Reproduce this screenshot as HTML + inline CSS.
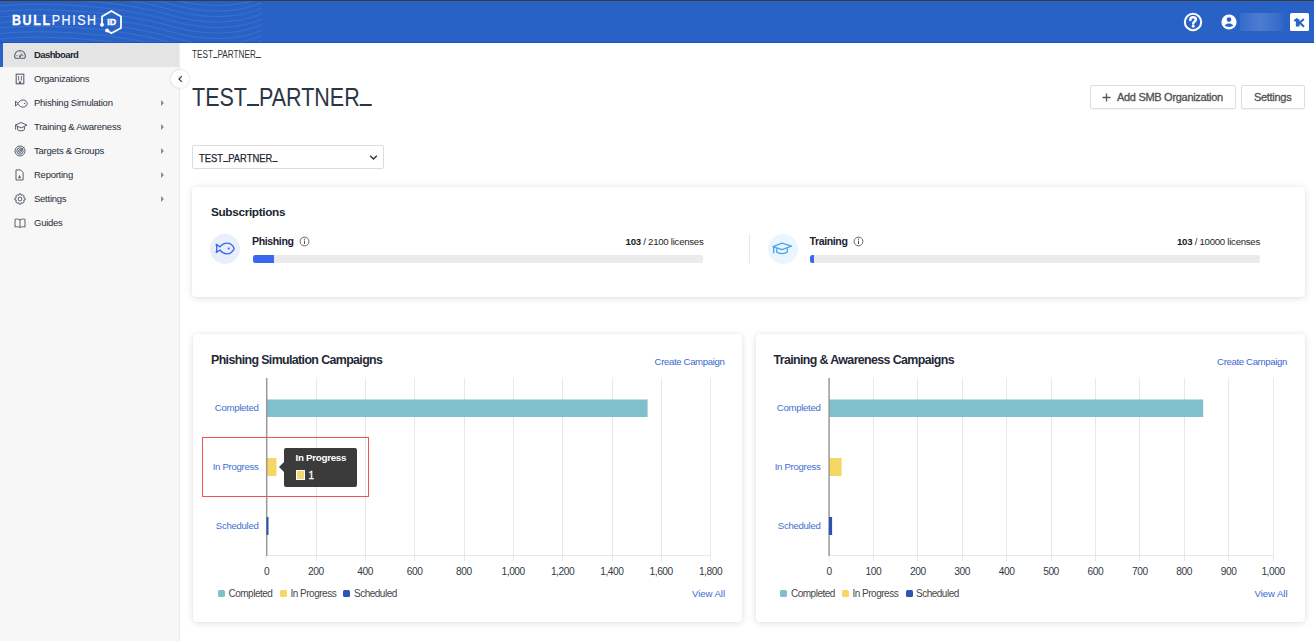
<!DOCTYPE html>
<html><head><meta charset="utf-8">
<style>
*{box-sizing:border-box;margin:0;padding:0}
html,body{width:1314px;height:641px;overflow:hidden;background:#fff;font-family:"Liberation Sans",sans-serif;color:#1f2733}
.abs{position:absolute}
#hdr{position:absolute;left:0;top:0;width:1314px;height:43px;background:#2962c6;border-top:1px solid #3b3a33;border-bottom:1px solid #1c52c2;overflow:hidden}
#side{position:absolute;left:0;top:43px;width:180px;height:598px;background:#f7f7f7;border-right:1px solid #ececec}
.nav{position:absolute;left:0;width:179px;height:24px;font-size:10px;color:#262d39}
.nav .t{position:absolute;left:34px;top:5.8px;white-space:nowrap;font-size:9.5px;letter-spacing:-0.25px}
.nav .ar{position:absolute;left:160.5px;top:9px;width:0;height:0;border-left:3.8px solid #8c9096;border-top:3px solid transparent;border-bottom:3px solid transparent}
.nav svg{position:absolute;left:13px;top:6px}
.nav.act{background:#e4e4e4}
.bl{position:absolute;left:0;top:0;width:3px;height:24px;background:#2962c6;z-index:2}
.nav.act .t{font-weight:bold;color:#1d2733;left:34px;letter-spacing:-0.6px}
.nav.act svg{left:13px}
.card{position:absolute;background:#fff;border-radius:4px;box-shadow:0 1px 7px rgba(0,0,0,.13),0 0 2px rgba(0,0,0,.04)}
.txt{position:absolute;white-space:nowrap}
.btn{position:absolute;border:1px solid #dedede;border-radius:2px;background:#fff;box-shadow:0 1px 1px rgba(0,0,0,.04)}
.bt{font-size:11px;color:#505050;letter-spacing:-0.3px;-webkit-text-stroke:0.3px #505050}
.lic{font-size:9.6px;color:#262626;letter-spacing:-0.25px}
.lic b{color:#1a1a1a}
.ct{font-size:12.4px;font-weight:bold;color:#1f2937;letter-spacing:-0.62px}
.lk{font-size:9.6px;color:#3a6ad0;letter-spacing:-0.35px}
.axl{font-size:10.2px;color:#323a45;letter-spacing:-0.45px}
.yl{font-size:9.6px;color:#3f70d0;letter-spacing:-0.3px}
.lg{position:absolute;width:7px;height:7px;border-radius:1.5px}
.lgt{font-size:10px;color:#474747;letter-spacing:-0.5px}
.us{display:inline-block;width:0.556em;height:1.6px;background:currentColor;vertical-align:baseline;margin-bottom:-0.5px}
</style></head><body>
<div id="hdr">
<svg class="abs" style="left:0;top:-1px" width="270" height="44" viewBox="0 0 270 44">
<g fill="none" stroke="#ffffff" stroke-opacity="0.09" stroke-width="1"><path d="M0 -32.5 C50 -37.5 125 -31.5 172 -17.5 C200 -9.5 235 -7.5 262 -19.5"/><path d="M0 -27.0 C50 -32.0 125 -26.0 172 -12.0 C200 -4.0 235 -2.0 262 -14.0"/><path d="M0 -21.5 C50 -26.5 125 -20.5 172 -6.5 C200 1.5 235 3.5 262 -8.5"/><path d="M0 -16.0 C50 -21.0 125 -15.0 172 -1.0 C200 7.0 235 9.0 262 -3.0"/><path d="M0 -10.5 C50 -15.5 125 -9.5 172 4.5 C200 12.5 235 14.5 262 2.5"/><path d="M0 -5.0 C50 -10.0 125 -4.0 172 10.0 C200 18.0 235 20.0 262 8.0"/><path d="M0 0.5 C50 -4.5 125 1.5 172 15.5 C200 23.5 235 25.5 262 13.5"/><path d="M0 6.0 C50 1.0 125 7.0 172 21.0 C200 29.0 235 31.0 262 19.0"/><path d="M0 11.5 C50 6.5 125 12.5 172 26.5 C200 34.5 235 36.5 262 24.5"/><path d="M0 17.0 C50 12.0 125 18.0 172 32.0 C200 40.0 235 42.0 262 30.0"/><path d="M0 22.5 C50 17.5 125 23.5 172 37.5 C200 45.5 235 47.5 262 35.5"/><path d="M0 28.0 C50 23.0 125 29.0 172 43.0 C200 51.0 235 53.0 262 41.0"/><path d="M0 33.5 C50 28.5 125 34.5 172 48.5 C200 56.5 235 58.5 262 46.5"/><path d="M0 39.0 C50 34.0 125 40.0 172 54.0 C200 62.0 235 64.0 262 52.0"/><path d="M0 44.5 C50 39.5 125 45.5 172 59.5 C200 67.5 235 69.5 262 57.5"/></g></svg>
<div class="abs" style="left:11.5px;top:11px;font-size:14.2px;color:#fff;letter-spacing:1.8px;white-space:nowrap;line-height:16px;transform:scaleX(.88);transform-origin:0 0"><b style="-webkit-text-stroke:0.3px #fff">BULL</b><span style="-webkit-text-stroke:0.15px #fff">PHISH</span></div>
<svg class="abs" style="left:94px;top:4px" width="34" height="34" viewBox="94 5 34 34">
<path d="M102 24.7 V16.5 L111.4 11 L121 16.5 V28 L111.4 33.3 L107.1 30.5" fill="none" stroke="#fff" stroke-width="1.75" stroke-linejoin="round"/>
<circle cx="102" cy="24.8" r="2" fill="#fff"/>
<circle cx="107.1" cy="30.5" r="2" fill="#fff"/>
<text x="111.8" y="24.6" font-family="Liberation Sans" font-weight="bold" font-size="8.9" fill="#fff" stroke="#fff" stroke-width="0.45" text-anchor="middle">ID</text>
</svg>
<svg class="abs" style="left:1183px;top:11px" width="20" height="20" viewBox="0 0 20 20">
<circle cx="10" cy="10" r="8.2" fill="none" stroke="#fff" stroke-width="2"/>
<path d="M7.3 7.9 C7.3 6.1 8.5 5.2 10.1 5.2 C11.8 5.2 12.9 6.2 12.9 7.6 C12.9 9.5 10.4 9.6 10.2 11.6" fill="none" stroke="#fff" stroke-width="2.5" stroke-linecap="round"/>
<circle cx="10.2" cy="14.3" r="1.45" fill="#fff"/>
</svg>
<svg class="abs" style="left:1221px;top:12.8px" width="16" height="16" viewBox="0 0 16 16">
<circle cx="8" cy="8" r="7.6" fill="#fff"/>
<circle cx="8" cy="5.6" r="2.3" fill="#2962c6"/>
<path d="M3.6 11.6 C4.6 9.9 6.4 9.4 8 9.4 C9.6 9.4 11.4 9.9 12.4 11.6 C11.3 12.4 9.8 12.9 8 12.9 C6.2 12.9 4.7 12.4 3.6 11.6Z" fill="#2962c6"/>
</svg>
<div class="abs" style="left:1240px;top:12px;width:44px;height:18px;background:linear-gradient(90deg,rgba(255,255,255,.06),rgba(255,255,255,.17) 45%,rgba(255,255,255,.08) 85%,rgba(255,255,255,.02))"></div>
<div class="abs" style="left:1290px;top:12px;width:18.5px;height:18px;background:#fff;border-radius:1.5px"></div>
<svg class="abs" style="left:1290px;top:11.3px" width="18" height="19" viewBox="0 0 18 19"><path d="M4.3 9 L6.9 7.2 V14.6" fill="none" stroke="#2962c6" stroke-width="2.1" stroke-linejoin="round"/><path d="M8.6 7.2 V14.6 M13.8 7 L9.8 10.7 L14 14.7" fill="none" stroke="#2962c6" stroke-width="2"/></svg>
</div>
<div id="side">
  <div class="bl"></div>
  <div class="nav act" style="top:0"><svg width="14" height="12" viewBox="0 0 14 12" style="left:13px;top:5px"><path d="M2.3 10.2 A5.3 5.3 0 1 1 11.7 10.2 Z" fill="none" stroke="#566070" stroke-width="1.1" stroke-linejoin="round"/><path d="M7 8.4 L9.2 5.6" stroke="#566070" stroke-width="1.1"/><circle cx="7" cy="8.6" r="1" fill="#566070"/><path d="M3.5 7.6 h1.1 M9.4 7.6 h1.1 M7 3.4 v1" stroke="#566070" stroke-width="0.9"/></svg><div class="t">Dashboard</div></div>
  <div class="nav" style="top:24px"><svg width="12" height="12" viewBox="0 0 12 12" style="left:14px;top:6px"><rect x="2.2" y="1.2" width="7.6" height="9.6" fill="none" stroke="#566070" stroke-width="1.1"/><path d="M4.6 3 v4.5 M7.4 3 v4.5" stroke="#566070" stroke-width="0.9"/><rect x="4.8" y="8.4" width="2.4" height="2.4" fill="#566070"/></svg><div class="t">Organizations</div></div>
  <div class="nav" style="top:48px"><svg width="14" height="10" viewBox="0 0 14 10" style="left:14px;top:8px"><path d="M1.5 2 L3.8 4.5 C5.3 1.7 7.6 1 9.3 1 C11.5 1 12.8 2.8 13.3 4.6 C12.8 6.4 11.5 8.2 9.3 8.2 C7.6 8.2 5.3 7.5 3.8 4.7 L1.5 7.2 Z" fill="none" stroke="#566070" stroke-width="1" stroke-linejoin="round"/><circle cx="10.6" cy="4.4" r="0.7" fill="#566070"/></svg><div class="t">Phishing Simulation</div><div class="ar"></div></div>
  <div class="nav" style="top:72px"><svg width="14" height="12" viewBox="0 0 14 12" style="left:14px;top:6px"><path d="M1 4.2 L7 1.5 L13 4.2 L7 6.9 Z" fill="none" stroke="#566070" stroke-width="1" stroke-linejoin="round"/><path d="M3.6 5.5 V8.8 C4.8 10.2 9.2 10.2 10.4 8.8 V5.5" fill="none" stroke="#566070" stroke-width="1"/><path d="M1.6 4.6 V8.6" stroke="#566070" stroke-width="1"/></svg><div class="t">Training &amp; Awareness</div><div class="ar"></div></div>
  <div class="nav" style="top:96px"><svg width="12" height="12" viewBox="0 0 12 12" style="left:13.5px;top:6px"><circle cx="6" cy="6" r="5" fill="none" stroke="#566070" stroke-width="1"/><circle cx="6" cy="6" r="3.2" fill="none" stroke="#566070" stroke-width="1"/><circle cx="6" cy="6" r="1.4" fill="none" stroke="#566070" stroke-width="1"/><path d="M6 6 L10.5 1.5" stroke="#566070" stroke-width="0.9"/></svg><div class="t">Targets &amp; Groups</div><div class="ar"></div></div>
  <div class="nav" style="top:120px"><svg width="10" height="12" viewBox="0 0 10 12" style="left:14.5px;top:6px"><path d="M1 0.9 H5.6 L8.1 3.4 V11 H1 Z" fill="none" stroke="#566070" stroke-width="1" stroke-linejoin="round"/><path d="M3 9.2 L4.6 5.8 L6.1 9.2 Z" fill="#566070"/></svg><div class="t">Reporting</div><div class="ar"></div></div>
  <div class="nav" style="top:144px"><svg width="12" height="12" viewBox="0 0 12 12" style="left:13.5px;top:5.8px"><path d="M9.84 4.86 L11.10 5.01 L11.10 6.99 L9.84 7.14 L9.52 7.91 L10.31 8.91 L8.91 10.31 L7.91 9.52 L7.14 9.84 L6.99 11.10 L5.01 11.10 L4.86 9.84 L4.09 9.52 L3.09 10.31 L1.69 8.91 L2.48 7.91 L2.16 7.14 L0.90 6.99 L0.90 5.01 L2.16 4.86 L2.48 4.09 L1.69 3.09 L3.09 1.69 L4.09 2.48 L4.86 2.16 L5.01 0.90 L6.99 0.90 L7.14 2.16 L7.91 2.48 L8.91 1.69 L10.31 3.09 L9.52 4.09 Z" fill="none" stroke="#566070" stroke-width="1" stroke-linejoin="round"/><circle cx="6" cy="6" r="1.9" fill="none" stroke="#566070" stroke-width="1"/></svg><div class="t">Settings</div><div class="ar"></div></div>
  <div class="nav" style="top:168px"><svg width="14" height="10" viewBox="0 0 14 10" style="left:13px;top:7px"><path d="M2 1.4 C3.8 0.8 5.5 1 7 1.9 C8.5 1 10.2 0.8 12 1.4 V9 C10.2 8.5 8.5 8.7 7 9.4 C5.5 8.7 3.8 8.5 2 9 Z" fill="none" stroke="#566070" stroke-width="1" stroke-linejoin="round"/><path d="M7 1.9 V9.4" stroke="#566070" stroke-width="1"/></svg><div class="t">Guides</div></div>
</div>
<div class="abs" style="left:171px;top:70px;width:18px;height:18px;border-radius:50%;background:#fff;box-shadow:0 0 3px rgba(0,0,0,.18)"><svg width="18" height="18" viewBox="0 0 18 18" style="position:absolute;left:0;top:0"><path d="M10.8 6.2 L8 9 L10.8 11.8" fill="none" stroke="#2b3a52" stroke-width="1.2"/></svg></div>

<div class="txt" style="left:192px;top:48.5px;font-size:10px;color:#333;transform:scaleX(.82);transform-origin:0 0">TEST<span class="us" style="height:1px;margin-bottom:0"></span>PARTNER<span class="us" style="height:1px;margin-bottom:0"></span></div>
<div class="txt" style="left:192px;top:82.5px;font-size:25px;color:#2b3644;transform:scaleX(.86);transform-origin:0 0">TEST<span class="us"></span>PARTNER<span class="us"></span></div>
<div class="btn" style="left:1089.5px;top:85px;width:146px;height:24px"></div>
<svg class="abs" style="left:1102px;top:93px" width="9" height="9" viewBox="0 0 9 9"><path d="M4.5 0.5 V8.5 M0.5 4.5 H8.5" stroke="#555" stroke-width="1.3"/></svg>
<div class="txt bt" style="left:1117px;top:91px">Add SMB Organization</div>
<div class="btn" style="left:1241px;top:85px;width:64px;height:24px"></div>
<div class="txt bt" style="left:1254px;top:91px">Settings</div>
<div class="abs" style="left:192px;top:145px;width:191.5px;height:24px;border:1px solid #dcdcdc;border-radius:2px;background:#fff"></div>
<div class="txt" style="left:199px;top:151.5px;font-size:10.5px;color:#1f2733;-webkit-text-stroke:0.25px #1f2733;transform:scaleX(.895);transform-origin:0 0">TEST<span class="us" style="height:1.2px;margin-bottom:-0.2px"></span>PARTNER<span class="us" style="height:1.2px;margin-bottom:-0.2px"></span></div>
<svg class="abs" style="left:369px;top:154px" width="9" height="7" viewBox="0 0 9 7"><path d="M1.2 1.8 L4.5 5 L7.8 1.8" fill="none" stroke="#333" stroke-width="1.4"/></svg>

<div class="card" style="left:192px;top:187px;width:1113px;height:110px"></div>
<div class="txt" style="left:211px;top:204.5px;font-size:11.8px;font-weight:bold;color:#1a2433;letter-spacing:-0.35px">Subscriptions</div>
<div class="abs" style="left:210px;top:233.5px;width:30px;height:30px;border-radius:50%;background:#e9eefb"></div>
<svg class="abs" style="left:214px;top:241px" width="22" height="15" viewBox="0 0 22 15"><path d="M2.3 3.4 L5.9 5.9 C7.9 3.5 10.3 2.1 13 2.1 C16.4 2.1 19 4.6 20.2 7.45 C19 10.3 16.4 12.8 13 12.8 C10.3 12.8 7.9 11.4 5.9 9 L2.3 11.5 C2.9 9.9 2.9 5 2.3 3.4 Z" fill="none" stroke="#3566ef" stroke-width="1.35" stroke-linejoin="round"/><circle cx="14.7" cy="7.5" r="1" fill="#3566ef"/></svg>
<div class="txt" style="left:252px;top:234.5px;font-size:10.6px;font-weight:bold;color:#1a2433;letter-spacing:-0.4px">Phishing</div>
<svg class="abs" style="left:298.5px;top:236px" width="11" height="11" viewBox="0 0 11 11"><circle cx="5.5" cy="5.5" r="4.4" fill="none" stroke="#555" stroke-width="0.9"/><path d="M5.5 4.6 V8" stroke="#555" stroke-width="1"/><circle cx="5.5" cy="3.2" r="0.6" fill="#555"/></svg>
<div class="txt lic" style="right:610.5px;top:235.5px"><b>103</b> / 2100 licenses</div>
<div class="abs" style="left:252.5px;top:255.3px;width:450.8px;height:7.4px;border-radius:2.5px;background:#ebebeb;overflow:hidden"><div style="width:21.5px;height:100%;background:#3868f0"></div></div>
<div class="abs" style="left:748.5px;top:234px;width:1px;height:29px;background:#e8e8e8"></div>
<div class="abs" style="left:767.5px;top:233.5px;width:30px;height:30px;border-radius:50%;background:#eaf5fd"></div>
<svg class="abs" style="left:771px;top:241px" width="22" height="15" viewBox="0 0 22 15"><path d="M2 5.6 L11 2.1 L20.5 5.2 L11 8.6 Z" fill="none" stroke="#4aa5e8" stroke-width="1.3" stroke-linejoin="round"/><path d="M5.7 7.2 V11 C7.6 13.1 14.4 13.1 16.3 11 V7.2" fill="none" stroke="#4aa5e8" stroke-width="1.3"/><path d="M2.7 6 V12.2" stroke="#4aa5e8" stroke-width="1.4"/></svg>
<div class="txt" style="left:809.5px;top:234.5px;font-size:10.6px;font-weight:bold;color:#1a2433;letter-spacing:-0.4px">Training</div>
<svg class="abs" style="left:853px;top:236px" width="11" height="11" viewBox="0 0 11 11"><circle cx="5.5" cy="5.5" r="4.4" fill="none" stroke="#555" stroke-width="0.9"/><path d="M5.5 4.6 V8" stroke="#555" stroke-width="1"/><circle cx="5.5" cy="3.2" r="0.6" fill="#555"/></svg>
<div class="txt lic" style="right:54px;top:235.5px"><b>103</b> / 10000 licenses</div>
<div class="abs" style="left:809.5px;top:255.3px;width:450.8px;height:7.4px;border-radius:2.5px;background:#ebebeb;overflow:hidden"><div style="width:4.8px;height:100%;background:#3868f0"></div></div>

<div class="card" style="left:192.5px;top:334px;width:549.5px;height:287.5px"></div>
<div class="card" style="left:755.5px;top:334px;width:549px;height:287.5px"></div>
<div class="txt ct" style="left:211px;top:352.5px">Phishing Simulation Campaigns</div>
<div class="txt lk" style="right:589.5px;top:355.5px">Create Campaign</div>
<div class="txt ct" style="left:773.5px;top:352.5px">Training &amp; Awareness Campaigns</div>
<div class="txt lk" style="right:27px;top:355.5px">Create Campaign</div>
<svg class="abs" style="left:0;top:0" width="1314" height="641"><path d="M316.5 378.5 V561" stroke="#e8e8e8" stroke-width="1"/><path d="M365.5 378.5 V561" stroke="#e8e8e8" stroke-width="1"/><path d="M414.5 378.5 V561" stroke="#e8e8e8" stroke-width="1"/><path d="M464.5 378.5 V561" stroke="#e8e8e8" stroke-width="1"/><path d="M513.5 378.5 V561" stroke="#e8e8e8" stroke-width="1"/><path d="M562.5 378.5 V561" stroke="#e8e8e8" stroke-width="1"/><path d="M612.5 378.5 V561" stroke="#e8e8e8" stroke-width="1"/><path d="M661.5 378.5 V561" stroke="#e8e8e8" stroke-width="1"/><path d="M710.5 378.5 V561" stroke="#e8e8e8" stroke-width="1"/><path d="M266 561 V556" stroke="#e8e8e8" stroke-width="1"/><path d="M266.7 555.5 H711" stroke="#e8e8e8" stroke-width="1"/><rect x="266.7" y="399.5" width="380.9" height="17.5" fill="#80bfcc"/><rect x="266.7" y="458" width="9.7" height="18" fill="#f3d865"/><path d="M266.70 378 V556" stroke="#999" stroke-width="1.5"/><rect x="266.5" y="517" width="2.0" height="18" fill="#2b52b5"/></svg>
<div class="txt axl" style="left:236.6px;top:566px;width:60px;text-align:center">0</div>
<div class="txt axl" style="left:285.9px;top:566px;width:60px;text-align:center">200</div>
<div class="txt axl" style="left:335.2px;top:566px;width:60px;text-align:center">400</div>
<div class="txt axl" style="left:384.6px;top:566px;width:60px;text-align:center">600</div>
<div class="txt axl" style="left:433.9px;top:566px;width:60px;text-align:center">800</div>
<div class="txt axl" style="left:483.2px;top:566px;width:60px;text-align:center">1,000</div>
<div class="txt axl" style="left:532.5px;top:566px;width:60px;text-align:center">1,200</div>
<div class="txt axl" style="left:581.8px;top:566px;width:60px;text-align:center">1,400</div>
<div class="txt axl" style="left:631.2px;top:566px;width:60px;text-align:center">1,600</div>
<div class="txt axl" style="left:680.5px;top:566px;width:60px;text-align:center">1,800</div><svg class="abs" style="left:0;top:0" width="1314" height="641"><path d="M873.5 378.5 V561" stroke="#e8e8e8" stroke-width="1"/><path d="M917.5 378.5 V561" stroke="#e8e8e8" stroke-width="1"/><path d="M962.5 378.5 V561" stroke="#e8e8e8" stroke-width="1"/><path d="M1006.5 378.5 V561" stroke="#e8e8e8" stroke-width="1"/><path d="M1051.5 378.5 V561" stroke="#e8e8e8" stroke-width="1"/><path d="M1095.5 378.5 V561" stroke="#e8e8e8" stroke-width="1"/><path d="M1139.5 378.5 V561" stroke="#e8e8e8" stroke-width="1"/><path d="M1184.5 378.5 V561" stroke="#e8e8e8" stroke-width="1"/><path d="M1228.5 378.5 V561" stroke="#e8e8e8" stroke-width="1"/><path d="M1273.5 378.5 V561" stroke="#e8e8e8" stroke-width="1"/><path d="M829 561 V556" stroke="#e8e8e8" stroke-width="1"/><path d="M829.1 555.5 H1274" stroke="#e8e8e8" stroke-width="1"/><rect x="829.1" y="399.5" width="374.1" height="17.5" fill="#80bfcc"/><rect x="829.1" y="458" width="12.5" height="18" fill="#f3d865"/><path d="M829.10 378 V556" stroke="#999" stroke-width="1.5"/><rect x="828.9" y="517" width="3.2" height="18" fill="#2b52b5"/></svg>
<div class="txt axl" style="left:799.0px;top:566px;width:60px;text-align:center">0</div>
<div class="txt axl" style="left:843.4px;top:566px;width:60px;text-align:center">100</div>
<div class="txt axl" style="left:887.8px;top:566px;width:60px;text-align:center">200</div>
<div class="txt axl" style="left:932.2px;top:566px;width:60px;text-align:center">300</div>
<div class="txt axl" style="left:976.6px;top:566px;width:60px;text-align:center">400</div>
<div class="txt axl" style="left:1021.0px;top:566px;width:60px;text-align:center">500</div>
<div class="txt axl" style="left:1065.4px;top:566px;width:60px;text-align:center">600</div>
<div class="txt axl" style="left:1109.8px;top:566px;width:60px;text-align:center">700</div>
<div class="txt axl" style="left:1154.2px;top:566px;width:60px;text-align:center">800</div>
<div class="txt axl" style="left:1198.6px;top:566px;width:60px;text-align:center">900</div>
<div class="txt axl" style="left:1243.0px;top:566px;width:60px;text-align:center">1,000</div>
<div class="txt yl" style="right:1055.5px;top:402px">Completed</div>
<div class="txt yl" style="right:1055.5px;top:461px">In Progress</div>
<div class="txt yl" style="right:1055.5px;top:519.5px">Scheduled</div>
<div class="txt yl" style="right:493.5px;top:402px">Completed</div>
<div class="txt yl" style="right:493.5px;top:461px">In Progress</div>
<div class="txt yl" style="right:493.5px;top:519.5px">Scheduled</div>
<div class="lg" style="left:217.5px;top:590px;background:#80bfcc"></div><div class="txt lgt" style="left:228.5px;top:588px">Completed</div>
<div class="lg" style="left:279.5px;top:590px;background:#f3d865"></div><div class="txt lgt" style="left:290.5px;top:588px">In Progress</div>
<div class="lg" style="left:343px;top:590px;background:#2e55b6"></div><div class="txt lgt" style="left:354px;top:588px">Scheduled</div>
<div class="txt lk" style="right:589px;top:587.5px;letter-spacing:-0.05px">View All</div>
<div class="lg" style="left:780px;top:590px;background:#80bfcc"></div><div class="txt lgt" style="left:791px;top:588px">Completed</div>
<div class="lg" style="left:842px;top:590px;background:#f3d865"></div><div class="txt lgt" style="left:852.5px;top:588px">In Progress</div>
<div class="lg" style="left:905.5px;top:590px;background:#2e55b6"></div><div class="txt lgt" style="left:916px;top:588px">Scheduled</div>
<div class="txt lk" style="right:26.5px;top:587.5px;letter-spacing:-0.05px">View All</div>

<div class="abs" style="left:284px;top:447.5px;width:73px;height:39px;background:#3b3b3b;border-radius:2px"></div>
<div class="abs" style="left:279px;top:462px;width:0;height:0;border-right:5px solid #3b3b3b;border-top:5px solid transparent;border-bottom:5px solid transparent"></div>
<div class="txt" style="left:295.5px;top:452px;font-size:9.8px;font-weight:bold;color:#fff;letter-spacing:-0.3px">In Progress</div>
<div class="abs" style="left:296px;top:470px;width:9px;height:10px;background:#f0d873;border:1px solid #fff"></div>
<div class="txt" style="left:308.5px;top:470px;font-size:10px;color:#fff;-webkit-text-stroke:0.3px #fff">1</div>
<div class="abs" style="left:202px;top:437px;width:167px;height:60px;border:1.6px solid #f05252"></div>
</body></html>
